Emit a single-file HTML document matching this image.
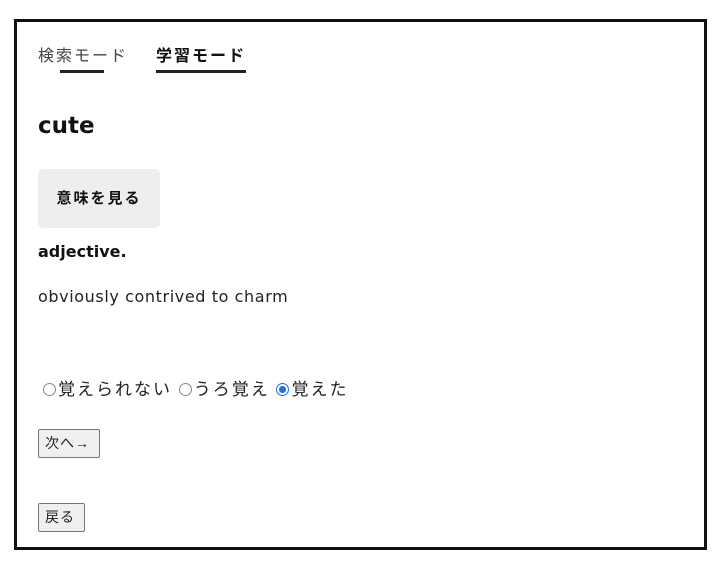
<!DOCTYPE html>
<html><head><meta charset="utf-8"><style>
*{margin:0;padding:0;box-sizing:border-box}
body{width:722px;height:564px;background:#fff;font-family:"DejaVu Sans","Noto Sans CJK JP",sans-serif;color:#222;position:relative;overflow:hidden}
.jp{font-family:"Liberation Sans","Noto Sans CJK JP",sans-serif}
.box{position:absolute;left:14px;top:19px;width:693px;height:531px;border:3px solid #111}
.a{position:absolute;white-space:nowrap}
.ul{position:absolute;height:3px;background:#222}
.btn{position:absolute;background:#efefef;border:1px solid #767676;border-radius:2px;font-size:14px;line-height:27px;padding:0 6px;letter-spacing:1px;font-family:"Liberation Sans","Noto Sans CJK JP",sans-serif}
.r{display:inline-block;width:13px;height:13px;border:1px solid #888;border-radius:50%;vertical-align:-1px;margin-right:2px}
</style></head><body>
<div class="box"></div>
<div class="a jp" style="left:38px;top:42px;font-size:16px;letter-spacing:2px;color:#444">検索モード</div>
<div class="ul" style="left:60px;top:70px;width:44px"></div>
<div class="a jp" style="left:156px;top:42px;font-size:16px;letter-spacing:2px;font-weight:bold;color:#111">学習モード</div>
<div class="ul" style="left:156px;top:70px;width:90px"></div>
<div class="a" style="left:38px;top:113px;font-size:23px;font-weight:bold;color:#111">cute</div>
<div class="a jp" style="left:38px;top:169px;width:122px;height:59px;background:#eee;border-radius:5px;font-size:15px;letter-spacing:2px;font-weight:bold;color:#111;text-align:center;line-height:59px">意味を見る</div>
<div class="a" style="left:38px;top:242px;font-size:16px;font-weight:bold;color:#111">adjective.</div>
<div class="a" style="left:38px;top:287px;font-size:16px;letter-spacing:0.6px">obviously contrived to charm</div>
<div class="a jp" style="left:43px;top:375px;font-size:17px;letter-spacing:2px"><span class="r"></span>覚えられない <span class="r"></span>うろ覚え <span class="r" style="border:1px solid #1a73e8;background:#fff;box-shadow:inset 0 0 0 2px #fff,inset 0 0 0 7px #1a73e8"></span>覚えた</div>
<div class="btn" style="left:38px;top:429px;height:29px;width:62px">次へ→</div>
<div class="btn" style="left:38px;top:503px;height:29px;width:47px">戻る</div>
</body></html>
